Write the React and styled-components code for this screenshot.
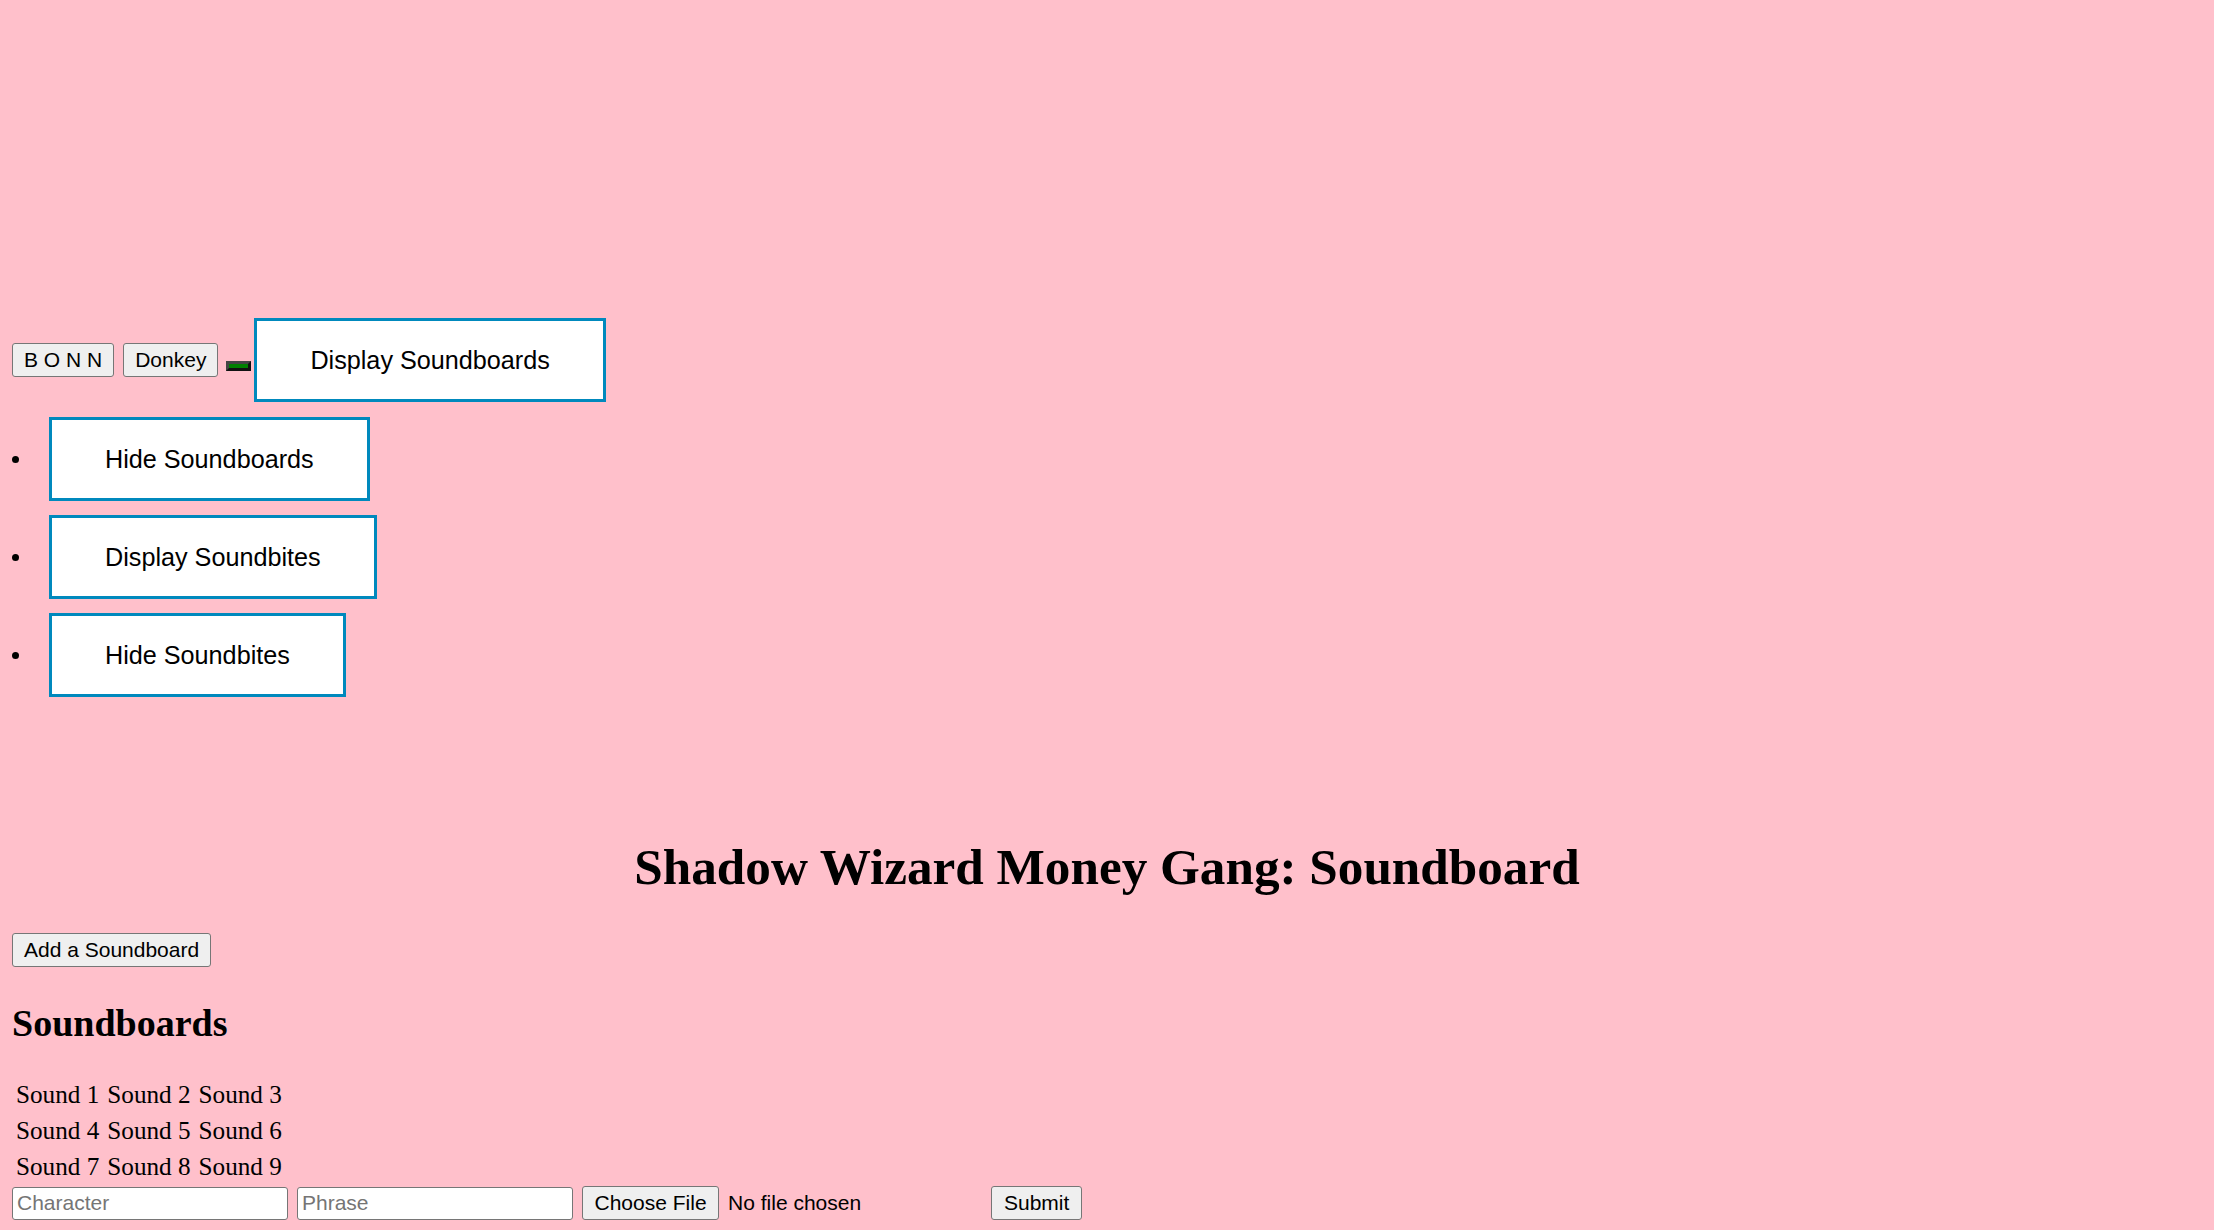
import React from "react";
import styled, { createGlobalStyle } from "styled-components";

const GlobalStyle = createGlobalStyle`
  html, body {
    background-color: pink;
  }
  body {
    margin: 12px;
    font-family: "Liberation Serif", "Times New Roman", serif;
    color: #000;
  }
`;

const TopBar = styled.div`
  display: flex;
  align-items: center;
  margin-top: 306px;
`;

const SmallButton = styled.button`
  height: 34px;
  padding: 0 ${(props) => props.$pad || 11}px;
  margin-right: ${(props) => props.$gap || 0}px;
  font-family: "Liberation Sans", Arial, sans-serif;
  font-size: 21px;
  color: #000;
  background-color: #efefef;
  border: 1px solid #767676;
  border-radius: 3px;
  cursor: pointer;
  &:hover {
    background-color: #e5e5e5;
  }
`;

const GreenButton = styled.button`
  width: 25px;
  height: 10px;
  padding: 0;
  margin: 12px 3px 0 0;
  background-color: #008000;
  border-width: 3px;
  border-style: solid;
  border-color: #444 #111 #111 #444;
`;

const BigButton = styled.button`
  height: 84px;
  padding: 0 53px;
  font-family: "Liberation Sans", Arial, sans-serif;
  font-size: 25.2px;
  color: #000;
  background-color: #fff;
  border: 3px solid #0089bd;
  cursor: pointer;
`;

const Menu = styled.ul`
  list-style: none;
  margin: 15px 0 0;
  padding: 0;
  display: flex;
  flex-direction: column;
  gap: 14px;
`;

const MenuItem = styled.li`
  display: flex;
  align-items: center;
  &::before {
    content: "";
    width: 7px;
    height: 7px;
    border-radius: 50%;
    background-color: #000;
    margin-right: 30px;
  }
`;

const Title = styled.h1`
  margin: 140px 0 0;
  font-size: 51.2px;
  line-height: 60px;
  font-weight: bold;
  text-align: center;
`;

const AddRow = styled.div`
  margin-top: 36px;
`;

const SectionTitle = styled.h2`
  margin: 34px 0 0;
  font-size: 38px;
  line-height: 44px;
  font-weight: bold;
`;

const SoundGrid = styled.div`
  display: grid;
  grid-template-columns: repeat(3, max-content);
  grid-auto-rows: 36px;
  column-gap: 8px;
  align-items: center;
  margin-top: 32px;
  padding-left: 4px;
  font-size: 25.2px;
`;

const Sound = styled.span`
  cursor: pointer;
`;

const Form = styled.form`
  display: flex;
  align-items: center;
  gap: 9px;
  margin-top: 1px;
`;

const TextInput = styled.input`
  box-sizing: border-box;
  width: 276px;
  height: 33px;
  padding: 0 4px;
  font-family: "Liberation Sans", Arial, sans-serif;
  font-size: 21px;
  background-color: #fff;
  border: 1px solid #767676;
  border-radius: 3px;
  &::placeholder {
    color: #757575;
  }
`;

const FileInput = styled.input`
  width: 400px;
  font-family: "Liberation Sans", Arial, sans-serif;
  font-size: 21px;
  color: #000;
  &::file-selector-button {
    height: 34px;
    padding: 0 11.5px;
    margin-right: 9px;
    font-family: "Liberation Sans", Arial, sans-serif;
    font-size: 21px;
    color: #000;
    background-color: #efefef;
    border: 1px solid #767676;
    border-radius: 3px;
  }
`;

const sounds = [
  ["Sound 1", "Sound 2", "Sound 3"],
  ["Sound 4", "Sound 5", "Sound 6"],
  ["Sound 7", "Sound 8", "Sound 9"],
];

const App = () => {
  return (
    <>
      <GlobalStyle />
      <TopBar>
        <SmallButton type="button" $gap={9}>
          B O N N
        </SmallButton>
        <SmallButton type="button" $gap={8}>
          Donkey
        </SmallButton>
        <GreenButton type="button" aria-label="toggle" />
        <BigButton type="button">Display Soundboards</BigButton>
      </TopBar>
      <Menu>
        <MenuItem>
          <BigButton type="button">Hide Soundboards</BigButton>
        </MenuItem>
        <MenuItem>
          <BigButton type="button">Display Soundbites</BigButton>
        </MenuItem>
        <MenuItem>
          <BigButton type="button">Hide Soundbites</BigButton>
        </MenuItem>
      </Menu>

      <Title>Shadow Wizard Money Gang: Soundboard</Title>

      <AddRow>
        <SmallButton type="button">Add a Soundboard</SmallButton>
      </AddRow>

      <SectionTitle>Soundboards</SectionTitle>

      <SoundGrid>
        {sounds.flat().map((s) => (
          <Sound key={s}>{s}</Sound>
        ))}
      </SoundGrid>

      <Form onSubmit={(e) => e.preventDefault()}>
        <TextInput type="text" placeholder="Character" />
        <TextInput type="text" placeholder="Phrase" />
        <FileInput type="file" />
        <SmallButton type="submit" $pad={12}>
          Submit
        </SmallButton>
      </Form>
    </>
  );
};

export default App;
